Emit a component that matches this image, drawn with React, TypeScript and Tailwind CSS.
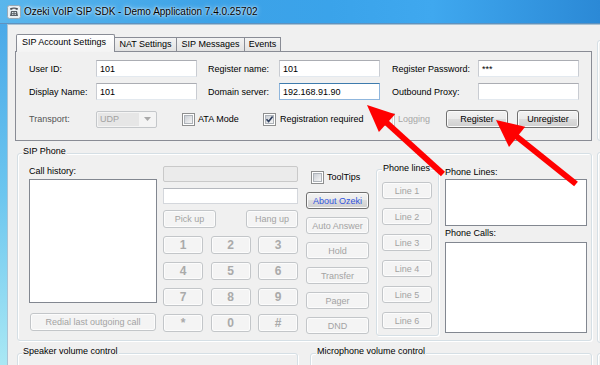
import React from "react";

const FONT = "font-['Liberation_Sans',Arial,sans-serif]";
const T9 = "text-[9px] leading-[12px]";

const BTN =
  "flex items-center justify-center rounded-[3px] border border-[#707070] bg-[linear-gradient(#f2f2f2,#ebebeb_49%,#dddddd_50%,#cfcfcf)] shadow-[inset_0_0_0_1px_#fbfbfb] text-[9px] leading-[12px] text-black";
const BTN_OFF =
  "flex items-center justify-center rounded-[3px] border border-[#c3c6c9] bg-[#f4f4f4] shadow-[inset_0_0_0_1px_#fcfcfc] text-[9px] leading-[12px] text-[#a3a3a3]";
const NUM_OFF =
  "flex items-center justify-center rounded-[3px] border border-[#c3c6c9] bg-[#f4f4f4] shadow-[inset_0_0_0_1px_#fcfcfc] text-[12px] leading-[12px] font-bold text-[#aaaaaa]";

function TextBox({ value = "", focused = false, className = "" }: { value?: string; focused?: boolean; className?: string }) {
  return (
    <div
      className={
        "flex h-[17px] items-center bg-white border px-[3px] text-[9px] leading-[12px] text-black " +
        (focused
          ? "border-[#8fb6dd] border-t-[#3d7bad]"
          : "border-[#c9ccd2] border-t-[#abadb3] border-b-[#e3e9ef]") +
        " " +
        className
      }
    >
      {value}
    </div>
  );
}

function Check({ checked = false, disabled = false }: { checked?: boolean; disabled?: boolean }) {
  return (
    <span
      className={
        "relative flex h-[13px] w-[13px] shrink-0 items-center justify-center border bg-white " +
        (disabled ? "border-[#c4c4c4]" : "border-[#8e8f8f]")
      }
    >
      <span
        className={
          "h-[9px] w-[9px] border " +
          (disabled ? "border-[#dcdcdc] bg-[#f1f1f1]" : "border-[#aeb3b9] bg-[linear-gradient(135deg,#cbcfd5,#f6f6f6)]")
        }
      />
      {checked && (
        <svg className="absolute left-[1px] top-[1px]" width="9" height="9" viewBox="0 0 9 9">
          <path d="M1.5 4.3 L3.6 6.6 L7.6 1.4" stroke="#2f3f5e" strokeWidth="1.6" fill="none" />
        </svg>
      )}
    </span>
  );
}

function Group({
  title,
  className = "",
  titleClass = "-top-[9px] left-[4px]",
  children,
}: {
  title: string;
  className?: string;
  titleClass?: string;
  children?: React.ReactNode;
}) {
  return (
    <div className={"relative rounded-[3px] border border-[#d5dfe5] shadow-[inset_1px_1px_0_#fff,1px_1px_0_#fff] " + className}>
      <span className={"absolute bg-[#f0f0f0] px-[1px] text-black whitespace-nowrap " + T9 + " " + titleClass}>{title}</span>
      {children}
    </div>
  );
}

function AppIcon() {
  return (
    <svg width="14" height="14" viewBox="0 0 14 14">
      <rect x="0.5" y="0.5" width="13" height="13" rx="2" fill="#e9eff3" stroke="#97a9b6" />
      <path d="M3 3.2 Q7 1.6 11 3.2 L10.4 5 L8.6 4.6 L8.4 3.8 L5.6 3.8 L5.4 4.6 L3.6 5 Z" fill="#4a4f55" />
      <path d="M4 6 L10 6 L11 11 L3 11 Z" fill="#5a6067" />
      <rect x="5" y="7" width="1" height="1" fill="#dfe6ea" />
      <rect x="6.5" y="7" width="1" height="1" fill="#dfe6ea" />
      <rect x="8" y="7" width="1" height="1" fill="#dfe6ea" />
      <rect x="5" y="8.8" width="1" height="1" fill="#dfe6ea" />
      <rect x="6.5" y="8.8" width="1" height="1" fill="#dfe6ea" />
      <rect x="8" y="8.8" width="1" height="1" fill="#dfe6ea" />
    </svg>
  );
}

export default function App() {
  return (
    <div className={"relative h-[365px] w-[600px] overflow-hidden bg-[#f0f0f0] text-black " + FONT}>
      {/* Title bar */}
      <div className="flex h-[24px] items-start border-b border-[#5f92bf] bg-[linear-gradient(90deg,#5ab6ec_0%,#3da2e7_35%,#3aa3ea_55%,#3fa8ef_72%,#2b89d6_100%)]">
        <div className="ml-[7px] mt-[5px]">
          <AppIcon />
        </div>
        <span className="ml-[3px] mt-[6px] text-[10px] leading-[12px] text-black [text-shadow:0_0_5px_#e6f4ff,0_0_2px_#ffffff]">
          Ozeki VoIP SIP SDK - Demo Application 7.4.0.25702
        </span>
      </div>

      {/* Body */}
      <div className="flex h-[341px]">
        <div className="w-[7px] bg-[linear-gradient(#4aa9e8,#6cc6ef_50%,#a9e8f4)]" />
        <div className="flex flex-1 overflow-hidden border-l border-t border-[#a9c3d4] bg-[#f0f0f0]">
          {/* Left column */}
          <div className="ml-[7px] w-[577px] shrink-0 pt-[9px]">
            {/* Tabs */}
            <div className="relative z-10 flex h-[17px] items-end pl-[1px]">
              <div className={"relative z-10 -mb-[1px] h-[18px] w-[99px] rounded-t-[2px] border border-b-0 border-[#898c95] bg-[linear-gradient(#ffffff,#f3f3f3)] pl-[5px] pt-[1px] whitespace-nowrap " + T9}>
                SIP Account Settings
              </div>
              <div className={"-ml-[1px] flex h-[14px] w-[63px] justify-center border border-b-0 border-[#898c95] bg-[linear-gradient(#f3f3f3,#e2e2e2)] whitespace-nowrap " + T9}>
                NAT Settings
              </div>
              <div className={"-ml-[1px] flex h-[14px] w-[69px] justify-center border border-b-0 border-[#898c95] bg-[linear-gradient(#f3f3f3,#e2e2e2)] whitespace-nowrap " + T9}>
                SIP Messages
              </div>
              <div className={"-ml-[1px] flex h-[14px] w-[37px] justify-center border border-b-0 border-[#898c95] bg-[linear-gradient(#f3f3f3,#e2e2e2)] whitespace-nowrap " + T9}>
                Events
              </div>
            </div>
            {/* Tab panel */}
            <div className="h-[90px] border border-[#898c95] bg-[#f0f0f0] pl-[13px] pt-[8px]">
              <div className="grid grid-cols-[67px_101px_11px_71px_101px_12px_86px_101px] items-center gap-y-[6px]">
                <span className={T9}>User ID:</span>
                <TextBox value="101" />
                <span />
                <span className={T9}>Register name:</span>
                <TextBox value="101" />
                <span />
                <span className={T9}>Register Password:</span>
                <TextBox value="***" />

                <span className={T9}>Display Name:</span>
                <TextBox value="101" />
                <span />
                <span className={T9}>Domain server:</span>
                <TextBox value="192.168.91.90" focused />
                <span />
                <span className={T9}>Outbound Proxy:</span>
                <TextBox value="" />
              </div>
              <div className="mt-[10px] flex h-[18px] items-center">
                <span className={"w-[67px] text-[#555555] " + T9}>Transport:</span>
                <div className="flex h-[17px] w-[61px] rounded-[2px] border border-[#c4c7ca] bg-[#f4f4f4] p-[1px]">
                  <div className={"flex flex-1 items-center bg-[#e6e6e6] pl-[2px] text-[#a2a2a2] " + T9}>UDP</div>
                  <div className="flex w-[16px] items-center justify-center">
                    <svg width="7" height="4" viewBox="0 0 7 4">
                      <path d="M0 0 L7 0 L3.5 4 Z" fill="#a9a9a9" />
                    </svg>
                  </div>
                </div>
                <div className="ml-[25px] flex w-[81px] items-center gap-[3px]">
                  <Check />
                  <span className={T9}>ATA Mode</span>
                </div>
                <div className="flex w-[118px] items-center gap-[4px]">
                  <Check checked />
                  <span className={"whitespace-nowrap " + T9}>Registration required</span>
                </div>
                <div className="flex w-[65px] items-center gap-[3px] pl-[1px]">
                  <Check disabled />
                  <span className={"text-[#a6a6a6] " + T9}>Logging</span>
                </div>
                <div className={"h-[18px] w-[62px] " + BTN}>Register</div>
                <div className={"ml-[9px] h-[18px] w-[62px] " + BTN}>Unregister</div>
              </div>
            </div>

            {/* SIP Phone */}
            <Group title="SIP Phone" className="ml-[2px] mt-[12px] h-[188px] w-[575px]">
              <div className="flex pl-[11px]">
                {/* Call history */}
                <div className="w-[128px] pt-[11px]">
                  <div className={T9}>Call history:</div>
                  <div className="mt-[2px] h-[124px] border border-[#828790] bg-white" />
                  <div className={"ml-[1px] mt-[10px] h-[18px] w-[126px] " + BTN_OFF}>Redial last outgoing call</div>
                </div>
                {/* Dial pad */}
                <div className="ml-[6px] w-[135px] pt-[12px]">
                  <div className="h-[16px] rounded-[2px] border border-[#c9c9c9] bg-[#ebebeb]" />
                  <div className="mt-[6px] h-[16px] border border-[#d4d7dc] border-t-[#b5b8be] bg-white" />
                  <div className="mt-[6px] flex justify-between">
                    <div className={"h-[18px] w-[53px] " + BTN_OFF}>Pick up</div>
                    <div className={"h-[18px] w-[52px] " + BTN_OFF}>Hang up</div>
                  </div>
                  <div className="mt-[8px] grid grid-cols-[40px_40px_40px] justify-between gap-y-[8px]">
                    {["1", "2", "3", "4", "5", "6", "7", "8", "9", "*", "0", "#"].map((k) => (
                      <div key={k} className={"h-[18px] " + NUM_OFF}>
                        {k}
                      </div>
                    ))}
                  </div>
                </div>
                {/* Actions */}
                <div className="ml-[8px] w-[63px] pt-[16px]">
                  <div className="flex h-[14px] items-center gap-[3px] pl-[5px]">
                    <Check />
                    <span className={T9}>ToolTips</span>
                  </div>
                  <div className="mt-[8px] flex flex-col gap-[8px]">
                    <div className={"h-[17px] w-[63px] text-[#3355dd] " + BTN.replace("text-black", "")}>About Ozeki</div>
                    <div className={"h-[17px] w-[63px] " + BTN_OFF}>Auto Answer</div>
                    <div className={"h-[17px] w-[63px] " + BTN_OFF}>Hold</div>
                    <div className={"h-[17px] w-[63px] " + BTN_OFF}>Transfer</div>
                    <div className={"h-[17px] w-[63px] " + BTN_OFF}>Pager</div>
                    <div className={"h-[17px] w-[63px] " + BTN_OFF}>DND</div>
                  </div>
                </div>
                {/* Phone lines group */}
                <Group title="Phone lines" titleClass="-top-[8px] left-[5px]" className="ml-[7px] mt-[15px] h-[167px] w-[63px]">
                  <div className="flex flex-col gap-[9px] pl-[5px] pt-[12px]">
                    {["Line 1", "Line 2", "Line 3", "Line 4", "Line 5", "Line 6"].map((l) => (
                      <div key={l} className={"h-[17px] w-[50px] " + BTN_OFF}>
                        {l}
                      </div>
                    ))}
                  </div>
                </Group>
                {/* Lists */}
                <div className="ml-[6px] w-[142px] pt-[12px]">
                  <div className={T9}>Phone Lines:</div>
                  <div className="mt-[1px] h-[47px] border border-[#828790] bg-white" />
                  <div className={"mt-[1px] " + T9}>Phone Calls:</div>
                  <div className="mt-[3px] h-[91px] border border-[#828790] bg-white" />
                </div>
              </div>
            </Group>

            {/* Volume controls */}
            <div className="mt-[12px] flex">
              <Group title="Speaker volume control" className="ml-[2px] h-[40px] w-[281px]" />
              <Group title="Microphone volume control" titleClass="-top-[9px] left-[5px]" className="ml-[12px] h-[40px] w-[282px]" />
            </div>
          </div>

          {/* Right column (cut off) */}
          <div className="ml-[5px] w-[40px] shrink-0">
            <div className="mt-[15px] h-[101px] rounded-[3px] border border-[#d5dfe5] shadow-[inset_1px_1px_0_#fff]" />
            <div className="mt-[11px] h-[191px] rounded-[3px] border border-[#d5dfe5] shadow-[inset_1px_1px_0_#fff]" />
            <div className="mt-[10px] h-[40px] rounded-[3px] border border-[#d5dfe5] shadow-[inset_1px_1px_0_#fff]" />
          </div>
        </div>
      </div>

      {/* Red annotation arrows */}
      <svg className="pointer-events-none absolute left-0 top-0" width="600" height="365" viewBox="0 0 600 365">
        <line x1="381.8" y1="118.4" x2="443" y2="174" stroke="#ff0000" strokeWidth="6" />
        <polygon points="367,105 378.9,132.1 395.1,114.3" fill="#ff0000" />
        <line x1="511.6" y1="132.5" x2="576" y2="184" stroke="#ff0000" strokeWidth="6" />
        <polygon points="496,120 509,147.1 525.2,126.7" fill="#ff0000" />
      </svg>
    </div>
  );
}
